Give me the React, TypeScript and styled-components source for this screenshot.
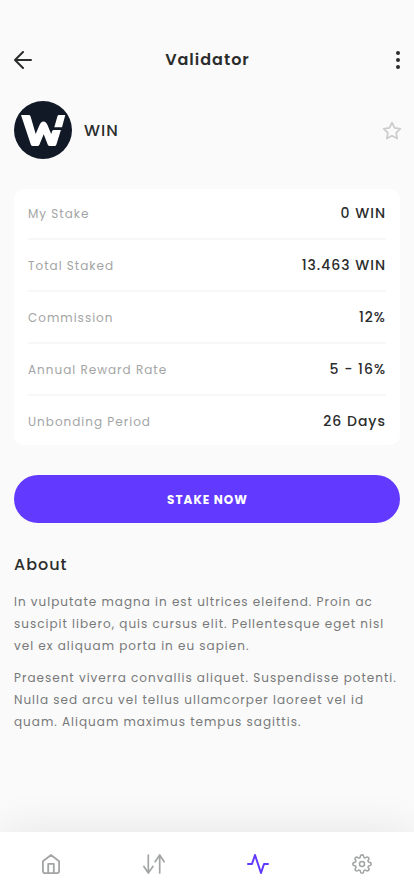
import React from "react";
import styled, { createGlobalStyle } from "styled-components";

const GlobalStyle = createGlobalStyle`
  * { box-sizing: border-box; }
  body {
    margin: 0;
    background: #fafafa;
    font-family: "Poppins", "Inter", sans-serif;
    letter-spacing: 1px;
    color: #2b2d2d;
  }
  svg { display: block; }
`;

const Screen = styled.div`
  height: 896px;
  display: flex;
  flex-direction: column;
  overflow: hidden;
  background: #fafafa;
`;

const Content = styled.main`
  flex: 1;
  padding: 44px 14px 0;
`;

const Header = styled.header`
  height: 32px;
  display: flex;
  align-items: center;
  justify-content: space-between;
`;

const Title = styled.h1`
  margin: 0;
  padding: 0 0 1px 1px;
  font-size: 16px;
  font-weight: 600;
  line-height: 24px;
`;

const IconButton = styled.button<{ $width: number; $align?: string }>`
  width: ${(p) => p.$width}px;
  padding: 0;
  border: 0;
  background: none;
  color: inherit;
  display: flex;
  justify-content: ${(p) => p.$align ?? "flex-start"};
`;

const Profile = styled.section`
  margin-top: 25px;
  height: 58px;
  display: flex;
  align-items: center;
`;

const Name = styled.h2`
  margin: 0 auto 0 12px;
  padding-top: 2px;
  font-size: 16px;
  font-weight: 500;
  line-height: 24px;
`;

const StarButton = styled(IconButton)`
  color: #cbcbcb;
  margin-right: -2px;
  padding-top: 1px;
`;

const Card = styled.dl`
  margin: 30px 0 0;
  padding: 0 14px;
  height: 256px;
  border-radius: 10px;
  background: #fff;
`;

const Row = styled.div`
  height: 52px;
  display: flex;
  align-items: center;
  justify-content: space-between;
  border-bottom: 2px solid #f7f7f7;
  &:first-child { height: 51px; padding-bottom: 1px; }
  &:last-child { height: 49px; border-bottom: 0; padding-top: 1px; }
`;

const Label = styled.dt`
  padding-top: 2px;
  font-size: 12px;
  line-height: 20px;
  color: #a3a5a5;
`;

const Value = styled.dd`
  margin: 0;
  font-size: 14px;
  font-weight: 500;
  line-height: 20px;
`;

const StakeButton = styled.button`
  width: 100%;
  height: 48px;
  margin-top: 30px;
  padding: 2px 0 0 1px;
  border: 0;
  border-radius: 24px;
  background: #623aff;
  color: #fff;
  font: inherit;
  font-size: 12px;
  font-weight: 700;
  letter-spacing: 1px;
`;

const SectionTitle = styled.h3`
  margin: 30px 0 14px;
  font-size: 16px;
  font-weight: 500;
  line-height: 24px;
`;

const Paragraph = styled.p`
  margin: 0 -4px 10px 0;
  font-size: 12px;
  line-height: 22px;
  color: #777979;
`;

const TabBar = styled.nav`
  height: 64px;
  display: grid;
  grid-template-columns: 102px 104px 104px 104px;
  background: #fff;
  box-shadow: 0 0 45px rgba(0, 0, 0, 0.09);
`;

const Tab = styled.a<{ $active?: boolean }>`
  display: flex;
  align-items: center;
  justify-content: center;
  color: ${(p) => (p.$active ? "#623aff" : "#a3a5a5")};
`;

const BackIcon = () => (
  <svg width="18" height="18" viewBox="0 0 18 18" fill="none" stroke="currentColor" strokeWidth="2" strokeLinecap="round" strokeLinejoin="round">
    <path d="M17 9H1M9 1L1 9l8 8" />
  </svg>
);

const MoreIcon = () => (
  <svg width="4" height="18" viewBox="0 0 4 18" fill="currentColor">
    <circle cx="2" cy="2" r="2" />
    <circle cx="2" cy="9" r="2" />
    <circle cx="2" cy="16" r="2" />
  </svg>
);

const StarIcon = () => (
  <svg width="20" height="20" viewBox="0 0 24 24" fill="none" stroke="currentColor" strokeWidth="2" strokeLinecap="round" strokeLinejoin="round">
    <path d="M12 2l3.09 6.26L22 9.27l-5 4.87 1.18 6.88L12 17.77l-6.18 3.25L7 14.14 2 9.27l6.91-1.01L12 2z" />
  </svg>
);

const WinLogo = () => (
  <svg width="58" height="58" viewBox="0 0 58 58">
    <circle cx="29" cy="29" r="29" fill="#111927" />
    <path
      fill="#fff"
      d="M7 14H14.500q1.700 0 2.100 1.400L21.700 33l3.600-8.600q1.600-4 4.200-4t4.200 4L37.200 33l1.100-3.200q.4-.9 1.500-.9H46.900l-4.500 14.600q-.5 1.500-2 1.500H35.800q-1.400 0-2-1.300L29.700 33.200l-4.300 10.500q-.6 1.300-2 1.300h-4.600q-1.500 0-2-1.500zM45 14H51.300l-3.300 12.300h-7.700l3.200-11.300q.3-1 1.500-1z"
    />
  </svg>
);

const HomeIcon = () => (
  <svg width="18" height="20" viewBox="0 0 18 20" fill="none" stroke="currentColor" strokeWidth="1.800" strokeLinejoin="round">
    <path d="M.9 7.200L9 1l8.100 6.200V17.100a2 2 0 0 1-2 2H2.900a2 2 0 0 1-2-2zM6.200 19V9.900h5.600V19" />
  </svg>
);

const SwapIcon = () => (
  <svg width="22" height="20" viewBox="0 0 22 20" fill="none" stroke="currentColor" strokeWidth="1.700" strokeLinecap="round" strokeLinejoin="round">
    <path d="M5.300 1v18M.9 12.500L5.300 19l4.600-6.500M16.700 19V1M12.100 7.700L16.700 1l4.400 6.700" />
  </svg>
);

const ActivityIcon = () => (
  <svg width="24" height="24" viewBox="0 0 24 24" fill="none" stroke="currentColor" strokeWidth="2" strokeLinecap="round" strokeLinejoin="round">
    <path d="M22 12h-4l-3 9L9 3l-3 9H2" />
  </svg>
);

const GearIcon = () => (
  <svg width="20" height="20" viewBox="0 0 24 24" fill="none" stroke="currentColor" strokeWidth="1.900" strokeLinecap="round" strokeLinejoin="round">
    <circle cx="12" cy="12" r="3" />
    <path d="M19.400 15a1.650 1.650 0 0 0 .33 1.820l.06.06a2 2 0 0 1 0 2.830 2 2 0 0 1-2.830 0l-.06-.06a1.650 1.650 0 0 0-1.820-.33 1.650 1.650 0 0 0-1 1.510V21a2 2 0 0 1-2 2 2 2 0 0 1-2-2v-.09A1.650 1.650 0 0 0 9 19.400a1.650 1.650 0 0 0-1.820.33l-.06.06a2 2 0 0 1-2.830 0 2 2 0 0 1 0-2.830l.06-.06a1.650 1.650 0 0 0 .33-1.820 1.650 1.650 0 0 0-1.510-1H3a2 2 0 0 1-2-2 2 2 0 0 1 2-2h.09A1.650 1.650 0 0 0 4.600 9a1.650 1.650 0 0 0-.33-1.820l-.06-.06a2 2 0 0 1 0-2.830 2 2 0 0 1 2.830 0l.06.06a1.650 1.650 0 0 0 1.820.33H9a1.650 1.650 0 0 0 1-1.510V3a2 2 0 0 1 2-2 2 2 0 0 1 2 2v.09a1.650 1.650 0 0 0 1 1.510 1.650 1.650 0 0 0 1.820-.33l.06-.06a2 2 0 0 1 2.830 0 2 2 0 0 1 0 2.830l-.06.06a1.650 1.650 0 0 0-.33 1.820V9a1.650 1.650 0 0 0 1.510 1H21a2 2 0 0 1 2 2 2 2 0 0 1-2 2h-.09a1.650 1.650 0 0 0-1.510 1z" />
  </svg>
);

const stats = [
  { label: "My Stake", value: "0 WIN" },
  { label: "Total Staked", value: "13.463 WIN" },
  { label: "Commission", value: "12%" },
  { label: "Annual Reward Rate", value: "5 - 16%" },
  { label: "Unbonding Period", value: "26 Days" },
];

const paragraphs = [
  "In vulputate magna in est ultrices eleifend. Proin ac suscipit libero, quis cursus elit. Pellentesque eget nisl vel ex aliquam porta in eu sapien.",
  "Praesent viverra convallis aliquet. Suspendisse potenti. Nulla sed arcu vel tellus ullamcorper laoreet vel id quam. Aliquam maximus tempus sagittis.",
];

export default function App() {
  return (
    <>
      <GlobalStyle />
      <Screen>
        <Content>
          <Header>
            <IconButton $width={18} aria-label="Back"><BackIcon /></IconButton>
            <Title>Validator</Title>
            <IconButton $width={18} $align="flex-end" aria-label="More"><MoreIcon /></IconButton>
          </Header>
          <Profile>
            <WinLogo />
            <Name>WIN</Name>
            <StarButton $width={20} aria-label="Favourite"><StarIcon /></StarButton>
          </Profile>
          <Card>
            {stats.map((s) => (
              <Row key={s.label}>
                <Label>{s.label}</Label>
                <Value>{s.value}</Value>
              </Row>
            ))}
          </Card>
          <StakeButton>STAKE NOW</StakeButton>
          <SectionTitle>About</SectionTitle>
          {paragraphs.map((text) => (
            <Paragraph key={text}>{text}</Paragraph>
          ))}
        </Content>
        <TabBar>
          <Tab aria-label="Home"><HomeIcon /></Tab>
          <Tab aria-label="Swap"><SwapIcon /></Tab>
          <Tab $active aria-label="Staking"><ActivityIcon /></Tab>
          <Tab aria-label="Settings"><GearIcon /></Tab>
        </TabBar>
      </Screen>
    </>
  );
}
